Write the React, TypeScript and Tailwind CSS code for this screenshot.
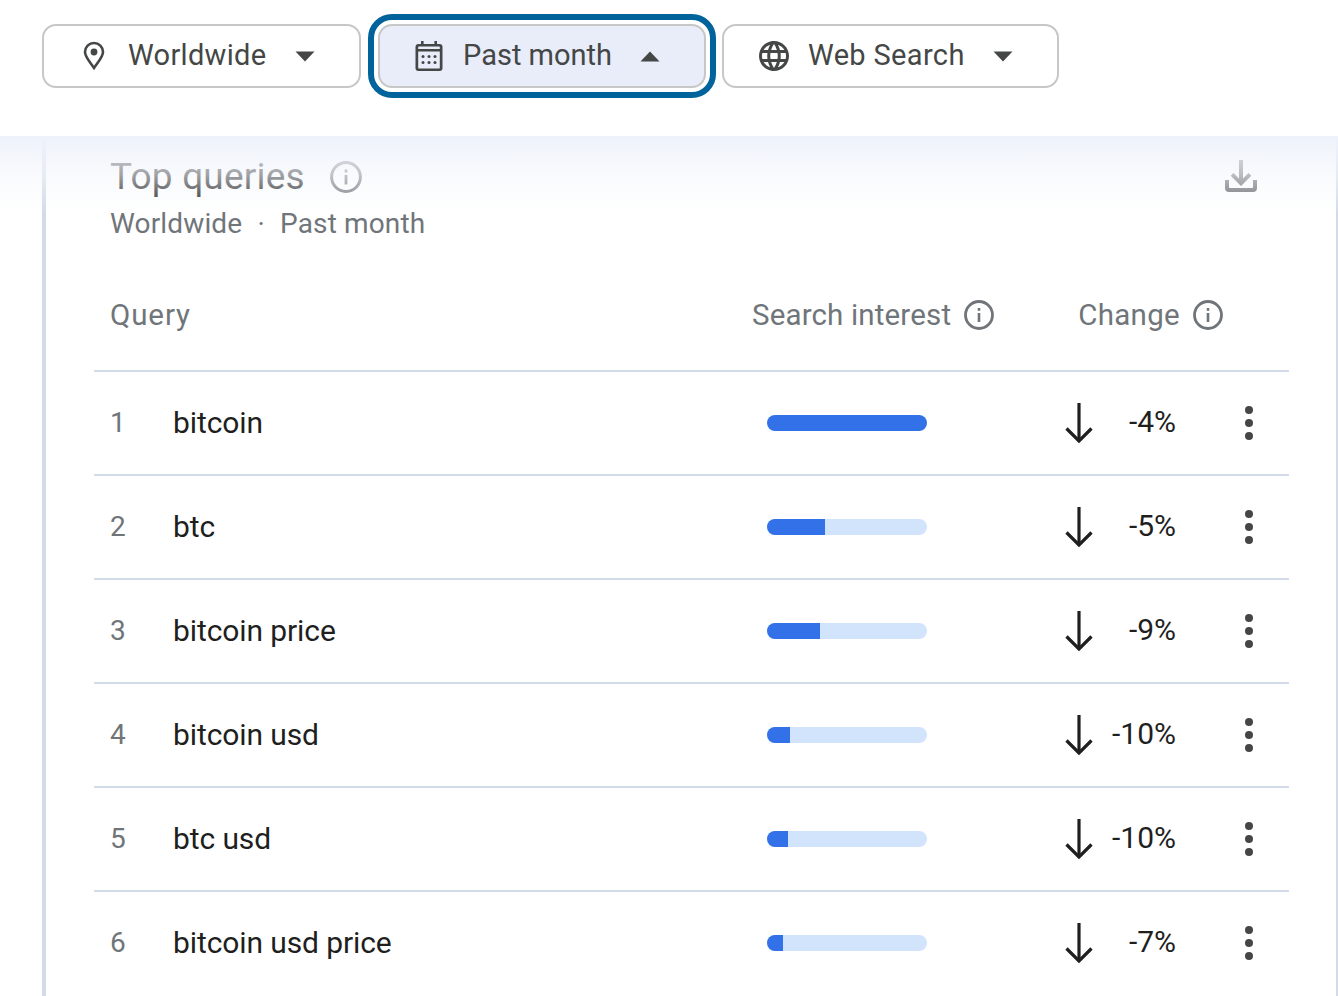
const rows = [
  { rank: 1, query: "bitcoin", fill: 160, change: "-4%" },
  { rank: 2, query: "btc", fill: 58, change: "-5%" },
  { rank: 3, query: "bitcoin price", fill: 53, change: "-9%" },
  { rank: 4, query: "bitcoin usd", fill: 23, change: "-10%" },
  { rank: 5, query: "btc usd", fill: 21, change: "-10%" },
  { rank: 6, query: "bitcoin usd price", fill: 16, change: "-7%" },
];

const Caret = ({ up = false }: { up?: boolean }) => (
  <svg width="20" height="11" viewBox="0 0 20 11" className="shrink-0 fill-[#444746]">
    <path d={up ? "M0.5 10.5 L10 0.5 L19.5 10.5 Z" : "M0.5 0.5 L10 10.5 L19.5 0.5 Z"} />
  </svg>
);

const PinIcon = () => (
  <svg width="24" height="30" viewBox="0 0 24 30" className="fill-none stroke-[#444746]">
    <path strokeWidth="2.6" d="M12 27 C8 21 3 16 3 11 a9 9 0 0 1 18 0 C21 16 16 21 12 27 Z" />
    <circle cx="12" cy="11" r="3.4" className="fill-[#444746] stroke-none" />
  </svg>
);

const CalendarIcon = () => (
  <svg width="28" height="30" viewBox="0 0 28 30" className="fill-[#444746]">
    <path d="M6 0h2.6v3h10.8V0H22v3h2.5A3 3 0 0 1 27.5 6v21a3 3 0 0 1-3 3h-21a3 3 0 0 1-3-3V6a3 3 0 0 1 3-3H6V0zM3.2 10.5V27c0 .3.2.5.5.5h20.6c.3 0 .5-.2.5-.5V10.5H3.2zm0-2.6h21.6V6c0-.3-.2-.5-.5-.5H3.700c-.3 0-.5.2-.5.5v1.900z" />
    <circle cx="8" cy="15.500" r="1.500" />
    <circle cx="14" cy="15.500" r="1.500" />
    <circle cx="20" cy="15.500" r="1.500" />
    <circle cx="8" cy="21.500" r="1.500" />
    <circle cx="14" cy="21.500" r="1.500" />
    <circle cx="20" cy="21.500" r="1.500" />
  </svg>
);

const GlobeIcon = () => (
  <svg width="36" height="36" viewBox="0 0 24 24" className="fill-[#444746]">
    <path d="M11.99 2C6.47 2 2 6.48 2 12s4.47 10 9.99 10C17.52 22 22 17.52 22 12S17.52 2 11.99 2zm6.93 6h-2.95c-.32-1.25-.78-2.45-1.38-3.56 1.84.63 3.37 1.91 4.33 3.56zM12 4.04c.83 1.2 1.48 2.53 1.91 3.96h-3.82c.43-1.43 1.08-2.76 1.91-3.96zM4.26 14C4.1 13.36 4 12.69 4 12s.1-1.36.26-2h3.38c-.08.66-.14 1.32-.14 2 0 .68.06 1.34.14 2H4.26zm.82 2h2.95c.32 1.25.78 2.45 1.38 3.56-1.84-.63-3.37-1.9-4.33-3.56zm2.95-8H5.08c.96-1.66 2.49-2.93 4.33-3.56C8.81 5.55 8.35 6.75 8.03 8zM12 19.96c-.83-1.2-1.48-2.53-1.91-3.96h3.82c-.43 1.43-1.08 2.76-1.91 3.96zM14.34 14H9.66c-.09-.66-.16-1.32-.16-2 0-.68.07-1.35.16-2h4.68c.09.65.16 1.32.16 2 0 .68-.07 1.34-.16 2zm.25 5.56c.6-1.11 1.06-2.31 1.38-3.56h2.95c-.96 1.65-2.49 2.93-4.33 3.56zM16.36 14c.08-.66.14-1.32.14-2 0-.68-.06-1.34-.14-2h3.38c.16.64.26 1.31.26 2s-.1 1.36-.26 2h-3.38z" />
  </svg>
);

const InfoIcon = ({ size = 30 }: { size?: number }) => (
  <svg width={size} height={size} viewBox="0 0 30 30" className="shrink-0">
    <circle cx="15" cy="15" r="13.500" fill="none" stroke="#70757a" strokeWidth="2.800" />
    <rect x="13.700" y="13" width="2.600" height="9" fill="#70757a" />
    <rect x="13.700" y="8" width="2.600" height="2.800" fill="#70757a" />
  </svg>
);

const DownloadIcon = () => (
  <svg width="32" height="32" viewBox="0 0 32 32" className="fill-[#5f6368]">
    <path d="M14 0h4v18.500l5.500-5.500 2.800 2.800L16 26 5.700 15.800 8.500 13l5.500 5.500z" />
    <path d="M0 20h4v7c0 .6.400 1 1 1h22c.6 0 1-.4 1-1v-7h4v8a4 4 0 0 1-4 4H4a4 4 0 0 1-4-4z" />
  </svg>
);

const ArrowDown = () => (
  <svg width="28" height="40" viewBox="0 0 28 40" className="fill-none stroke-[#1f1f1f]" strokeWidth="3.200">
    <path d="M14 0 V37" />
    <path d="M1.500 25.500 L14 38 L26.500 25.500" />
  </svg>
);

const MoreDots = () => (
  <div className="flex flex-col gap-[5px]">
    <span className="h-2 w-2 rounded-full bg-[#444746]" />
    <span className="h-2 w-2 rounded-full bg-[#444746]" />
    <span className="h-2 w-2 rounded-full bg-[#444746]" />
  </div>
);

const App = () => (
  <div className="h-[996px] w-[1338px] overflow-hidden bg-white font-['Roboto','Liberation_Sans',sans-serif]">
    <div className="flex h-[136px] items-start pl-[42px] pt-[24px]">
      <button className="flex h-16 w-[319px] items-center rounded-[14px] border-2 border-[#c7c7c7] bg-white pl-[38px] text-[29px] tracking-[0.3px] text-[#444746]">
        <PinIcon />
        <span className="ml-[22px]">Worldwide</span>
        <span className="ml-[29px]"><Caret /></span>
      </button>
      <button className="ml-[17px] flex h-16 w-[328px] items-center rounded-[14px] border-2 border-[#c7c7c7] bg-[#e8edf9] pl-[35px] text-[29px] text-[#444746] outline-[6px] outline-offset-[4px] outline-[#00639b]">
        <CalendarIcon />
        <span className="ml-[20px]">Past month</span>
        <span className="ml-[28px]"><Caret up /></span>
      </button>
      <button className="ml-[16px] flex h-16 w-[337px] items-center rounded-[14px] border-2 border-[#c7c7c7] bg-white pl-[32px] text-[29px] tracking-[0.35px] text-[#444746]">
        <GlobeIcon />
        <span className="ml-[16px]">Web Search</span>
        <span className="ml-[28px]"><Caret /></span>
      </button>
    </div>

    <div className="relative">
      <div className="ml-[42px] h-[860px] w-[1296px] border-r-2 border-l-4 border-[#d3dbe8]">
        <div className="relative h-[159px] pl-[64px]">
          <div className="flex items-center pt-[21px]">
            <h2 className="text-[37px] leading-10 font-normal tracking-[0.2px] text-[#1f1f1f]">Top queries</h2>
            <span className="ml-[25px]"><InfoIcon size={32} /></span>
          </div>
          <div className="mt-[7px] text-[28px] leading-10 tracking-[0.15px] text-[#70757a]">
            Worldwide <span className="mx-[8px]">·</span> Past month
          </div>
          <div className="absolute top-6 right-[79px]"><DownloadIcon /></div>
        </div>

        <div className="ml-[48px] w-[1195px]">
          <div className="flex items-center pb-[35px] pl-[16px] text-[29.500px] leading-[40px] tracking-[0.15px] text-[#70757a]">
            <span className="w-[642px] tracking-[0.9px]">Query</span>
            <span>Search interest</span>
            <span className="ml-[13px]"><InfoIcon /></span>
            <span className="ml-[84px] tracking-[0.3px]">Change</span>
            <span className="ml-[13px]"><InfoIcon /></span>
          </div>
          {rows.map((row) => (
            <div key={row.rank} className="flex h-[104px] items-center border-t-2 border-[#d3dbe8] pl-[16px]">
              <span className="w-[63px] text-[28px] text-[#70757a]">{row.rank}</span>
              <span className="w-[594px] text-[30px] leading-[42px] tracking-[-0.1px] text-[#1f1f1f]">{row.query}</span>
              <div className="h-4 w-40 overflow-hidden rounded-lg bg-[#d2e3fc]">
                <div className="h-full bg-[#3371e8]" style={{ width: row.fill }} />
              </div>
              <span className="ml-[138px]"><ArrowDown /></span>
              <span className="mb-[3px] w-[83px] text-right text-[30px] text-[#1f1f1f]">{row.change}</span>
              <span className="ml-[69px]"><MoreDots /></span>
            </div>
          ))}
        </div>
      </div>
      <div className="pointer-events-none absolute top-0 left-0 h-[78px] w-full bg-gradient-to-b from-[#eef2fa] via-[#f4f7fc99] to-[#ffffff00]" />
    </div>
  </div>
);

export default App;
